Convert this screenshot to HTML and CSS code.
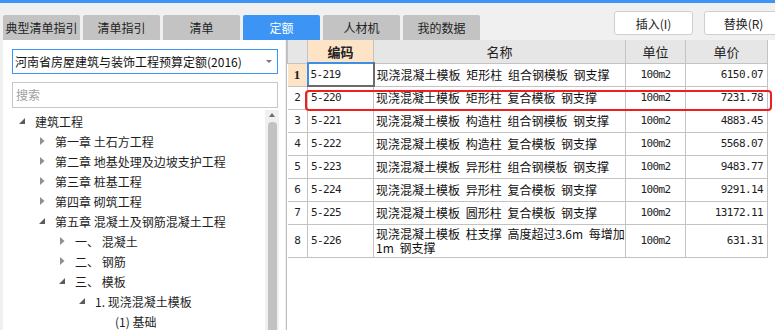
FILE: index.html
```html
<!DOCTYPE html>
<html>
	<head>
		<meta charset="utf-8">
		<title>定额</title>
		<link rel="stylesheet" href="styles.css">
	</head>
	<body>
		<div class="topline"></div>

		<!-- 顶部标签和按钮 -->
		<div class="toolbar">
			<ul class="tabs">
				<li>典型清单指引</li>
				<li>清单指引</li>
				<li>清单</li>
				<li class="active">定额</li>
				<li>人材机</li>
				<li>我的数据</li>
			</ul>
			<div class="btns">
				<button class="btn">插入(I)</button>
				<button class="btn">替换(R)</button>
			</div>
		</div>

		<div class="main">
			<!-- 左侧定额库和章节树 -->
			<div class="side">
				<div class="select">
					<span>河南省房屋建筑与装饰工程预算定额(2016)</span>
					<i class="caret"></i>
				</div>
				<div class="search">搜索</div>
				<div class="treebox">
					<ul class="tree">
						<li class="lv0"><span class="tg"><svg class="open" width="6" height="6"><polygon points="6,0 6,6 0,6"/></svg></span>建筑工程</li>
						<li class="lv1"><span class="tg"><svg class="shut" width="5" height="8"><polygon points="0,0 4.5,4 0,8"/></svg></span>第一章 土石方工程</li>
						<li class="lv1"><span class="tg"><svg class="shut" width="5" height="8"><polygon points="0,0 4.5,4 0,8"/></svg></span>第二章 地基处理及边坡支护工程</li>
						<li class="lv1"><span class="tg"><svg class="shut" width="5" height="8"><polygon points="0,0 4.5,4 0,8"/></svg></span>第三章 桩基工程</li>
						<li class="lv1"><span class="tg"><svg class="shut" width="5" height="8"><polygon points="0,0 4.5,4 0,8"/></svg></span>第四章 砌筑工程</li>
						<li class="lv1"><span class="tg"><svg class="open" width="6" height="6"><polygon points="6,0 6,6 0,6"/></svg></span>第五章 混凝土及钢筋混凝土工程</li>
						<li class="lv2"><span class="tg"><svg class="shut" width="5" height="8"><polygon points="0,0 4.5,4 0,8"/></svg></span>一、&nbsp;混凝土</li>
						<li class="lv2"><span class="tg"><svg class="shut" width="5" height="8"><polygon points="0,0 4.5,4 0,8"/></svg></span>二、&nbsp;钢筋</li>
						<li class="lv2"><span class="tg"><svg class="open" width="6" height="6"><polygon points="6,0 6,6 0,6"/></svg></span>三、&nbsp;模板</li>
						<li class="lv3"><span class="tg"><svg class="open" width="6" height="6"><polygon points="6,0 6,6 0,6"/></svg></span>1. 现浇混凝土模板</li>
						<li class="lv4"><span class="tg"></span>(1) 基础</li>
					</ul>
					<div class="scroll">
						<span class="up"></span>
						<span class="thumb"></span>
					</div>
				</div>
			</div>

			<!-- 右侧定额列表 -->
			<div class="grid">
				<table>
					<colgroup>
						<col style="width:20px">
						<col style="width:66px">
						<col style="width:252px">
						<col style="width:60px">
						<col style="width:82px">
					</colgroup>
					<tr class="head">
						<th></th>
						<th class="cur">编码</th>
						<th>名称</th>
						<th>单位</th>
						<th>单价</th>
					</tr>
					<tr>
						<td class="no cur">1</td>
						<td class="num code sel">5-219</td>
						<td class="name">现浇混凝土模板 矩形柱 组合钢模板 钢支撑</td>
						<td class="num unit">100m2</td>
						<td class="num price">6150.07</td>
					</tr>
					<tr>
						<td class="no num">2</td>
						<td class="num code">5-220</td>
						<td class="name">现浇混凝土模板 矩形柱 复合模板 钢支撑</td>
						<td class="num unit">100m2</td>
						<td class="num price">7231.78</td>
					</tr>
					<tr>
						<td class="no num">3</td>
						<td class="num code">5-221</td>
						<td class="name">现浇混凝土模板 构造柱 组合钢模板 钢支撑</td>
						<td class="num unit">100m2</td>
						<td class="num price">4883.45</td>
					</tr>
					<tr>
						<td class="no num">4</td>
						<td class="num code">5-222</td>
						<td class="name">现浇混凝土模板 构造柱 复合模板 钢支撑</td>
						<td class="num unit">100m2</td>
						<td class="num price">5568.07</td>
					</tr>
					<tr>
						<td class="no num">5</td>
						<td class="num code">5-223</td>
						<td class="name">现浇混凝土模板 异形柱 组合钢模板 钢支撑</td>
						<td class="num unit">100m2</td>
						<td class="num price">9483.77</td>
					</tr>
					<tr>
						<td class="no num">6</td>
						<td class="num code">5-224</td>
						<td class="name">现浇混凝土模板 异形柱 复合模板 钢支撑</td>
						<td class="num unit">100m2</td>
						<td class="num price">9291.14</td>
					</tr>
					<tr>
						<td class="no num">7</td>
						<td class="num code">5-225</td>
						<td class="name">现浇混凝土模板 圆形柱 复合模板 钢支撑</td>
						<td class="num unit">100m2</td>
						<td class="num price">13172.11</td>
					</tr>
					<tr class="tall">
						<td class="no num">8</td>
						<td class="num code">5-226</td>
						<td class="name">现浇混凝土模板 柱支撑 高度超过3.6m 每增加<br>1m 钢支撑</td>
						<td class="num unit">100m2</td>
						<td class="num price">631.31</td>
					</tr>
				</table>
				<!-- 红框标记 -->
				<div class="mark"></div>
			</div>
		</div>
	</body>
</html>
```

FILE: styles.css
```css
*{
	margin: 0;
	padding: 0;
	box-sizing: border-box;
}
body {
	width: 775px;
	height: 330px;
	overflow: hidden;
	background-color: #f0f0f0;
	font-family: "Noto Sans CJK SC", sans-serif;
	font-size: 12px;
	color: #1e1e1e;
}
.topline {
	height: 3px;
	background-color: #3c95f5;
}
.toolbar {
	height: 37px;
	display: flex;
	align-items: flex-end;
}
.tabs {
	display: flex;
	list-style: none;
	padding-left: 3px;
}
.tabs li {
	width: 77px;
	height: 25px;
	line-height: 25px;
	margin-right: 3px;
	text-align: center;
	white-space: nowrap;
	overflow: hidden;
	background-color: #c3c3c3;
	border-radius: 2px 2px 0 0;
	font-size: 12px;
	color: #222;
}
.tabs li.active {
	background-color: #3c95f5;
	color: #fff;
}
.btns {
	margin-left: auto;
	margin-right: -8px;
	align-self: flex-start;
	margin-top: 8px;
	display: flex;
}
.btn {
	width: 79px;
	height: 24px;
	margin-left: 11px;
	background-color: #fff;
	border: 1px solid #cfcfcf;
	border-radius: 3px;
	font-family: "Noto Sans CJK SC", sans-serif;
	font-size: 12px;
	color: #222;
}
.main {
	height: 290px;
	display: flex;
}
.side {
	width: 282px;
	margin-left: 3px;
	background-color: #fff;
	padding-top: 9px;
	display: flex;
	flex-direction: column;
}
.select {
	margin-left: 9px;
	width: 266px;
	height: 25px;
	border: 1px solid #3c95f5;
	display: flex;
	align-items: center;
	padding-left: 2px;
	font-size: 12px;
	color: #111;
}
.caret {
	margin-left: auto;
	margin-right: 5px;
	border-left: 3px solid transparent;
	border-right: 3px solid transparent;
	border-top: 3px solid #777;
}
.search {
	margin: 8px 0 0 9px;
	width: 266px;
	height: 26px;
	line-height: 24px;
	border: 1px solid #c6c6c6;
	padding-left: 3px;
	color: #a0a0a0;
}
.treebox {
	flex: 1;
	display: flex;
	margin-top: 2px;
	overflow: hidden;
}
.tree {
	flex: 1;
	list-style: none;
	padding-top: 1px;
}
.tree li {
	height: 20px;
	display: flex;
	align-items: center;
	white-space: nowrap;
}
.tree .lv0 { padding-left: 12px; }
.tree .lv1 { padding-left: 32px; }
.tree .lv2 { padding-left: 52px; }
.tree .lv3 { padding-left: 72px; }
.tree .lv4 { padding-left: 92px; }
.tg {
	width: 20px;
	display: flex;
	align-items: center;
}
.tg svg {
	display: block;
}
.tg .open {
	margin-left: 4px;
	fill: #5a5a5a;
}
.tg .shut {
	margin-left: 5px;
	fill: #8f8f8f;
}
.scroll {
	width: 14px;
	margin-right: 6px;
	background-color: #f0f0f0;
	display: flex;
	flex-direction: column;
	align-items: center;
}
.scroll .up {
	margin-top: 3px;
	border-left: 3px solid transparent;
	border-right: 3px solid transparent;
	border-bottom: 4px solid #6e6e6e;
}
.scroll .thumb {
	margin-top: 5px;
	width: 9px;
	flex: 1;
	background-color: #c2c2c2;
	border-radius: 4px 4px 0 0;
}
.grid {
	flex: 1;
	margin-left: 1px;
	background-color: #fff;
	border-left: 1px solid #bdbdbd;
	position: relative;
}
table {
	border-collapse: collapse;
	table-layout: fixed;
	width: 480px;
}
th, td {
	border: 1px solid #c3c3c3;
	padding: 0;
	white-space: nowrap;
	overflow: hidden;
}
tr {
	height: 23px;
}
.head th {
	background-color: #e6e6e6;
	font-weight: normal;
	font-size: 13px;
	color: #222;
	border-top: none;
}
.head th.cur {
	background-color: #fde4c6;
	font-weight: bold;
}
td.no {
	text-align: center;
	border-left: none;
}
td.no.cur {
	background-color: #fde4c6;
	font-family: "Liberation Serif", serif;
	font-weight: bold;
	font-size: 13px;
}
.num {
	font-family: "DejaVu Sans Mono", monospace;
	font-size: 11px;
	letter-spacing: -0.6px;
}
.code {
	padding-left: 3px;
}
td.sel {
	border-left: 2px solid #3b8fe8;
	border-top: 2px solid #3b8fe8;
	border-right: 2px solid #6b6b6b;
	border-bottom: 2px solid #6b6b6b;
	padding-left: 2px;
}
.name {
	padding-left: 2px;
	word-spacing: 3px;
	color: #111;
}
.unit {
	text-align: center;
}
.price {
	text-align: right;
	padding-right: 4px;
}
.tall {
	height: 33px;
}
.tall .name {
	line-height: 14px;
}
.mark {
	position: absolute;
	left: 18px;
	top: 50px;
	width: 467px;
	height: 21px;
	border: 2px solid #ee1f1f;
	border-radius: 4px;
}
```
